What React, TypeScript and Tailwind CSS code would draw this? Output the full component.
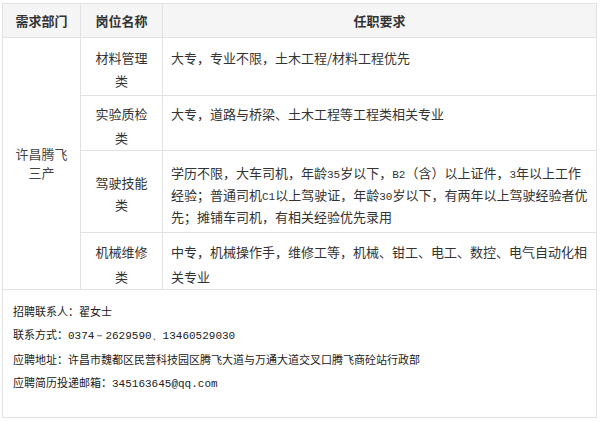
import React from 'react';

const Num: React.FC<{ children: React.ReactNode }> = ({ children }) => (
  <span className="font-['Liberation_Mono',monospace] text-[11px]">{children}</span>
);

const App: React.FC = () => {
  return (
    <div className="w-[600px] h-[421px] bg-white pt-[3px] pl-[2px] font-['Noto_Sans_CJK_SC','Noto_Sans',sans-serif] text-[#333]">
      <table className="w-[595px] table-fixed border-collapse border border-[#e2e2e2] text-[13px]">
        <colgroup>
          <col className="w-[78px]" />
          <col className="w-[82px]" />
          <col />
        </colgroup>
        <thead>
          <tr className="h-[34px] bg-[#f5f5f5]">
            <th className="border border-[#e2e2e2] font-bold text-center">需求部门</th>
            <th className="border border-[#e2e2e2] font-bold text-center">岗位名称</th>
            <th className="border border-[#e2e2e2] font-bold text-center">任职要求</th>
          </tr>
        </thead>
        <tbody>
          <tr className="h-[58px]">
            <td rowSpan={4} className="border border-[#e2e2e2] text-center align-middle leading-[19px] text-[#444] pb-[2px]">
              许昌腾飞
              <br />
              三产
            </td>
            <td className="border border-[#e2e2e2] text-center align-top pt-[8px] leading-[23px]">
              材料管理
              <br />类
            </td>
            <td className="border border-[#e2e2e2] align-top pt-[8px] px-[8px] leading-[23px]">
              大专，专业不限，土木工程/材料工程优先
            </td>
          </tr>
          <tr className="h-[55px]">
            <td className="border border-[#e2e2e2] text-center align-top pt-[6px] leading-[24px]">
              实验质检
              <br />类
            </td>
            <td className="border border-[#e2e2e2] align-top pt-[6px] px-[8px] leading-[24px]">
              大专，道路与桥梁、土木工程等工程类相关专业
            </td>
          </tr>
          <tr className="h-[82px]">
            <td className="border border-[#e2e2e2] text-center align-middle leading-[22px] pt-[4px]">
              驾驶技能
              <br />类
            </td>
            <td className="border border-[#e2e2e2] align-top pt-[12px] px-[8px] leading-[20px]">
              学历不限，大车司机，年龄<Num>35</Num>岁以下，<Num>B2</Num>（含）以上证件，<Num>3</Num>年以上工作
              <br />
              经验；普通司机<Num>C1</Num>以上驾驶证，年龄<Num>30</Num>岁以下，有两年以上驾驶经验者优
              <br />
              先；摊铺车司机，有相关经验优先录用
            </td>
          </tr>
          <tr className="h-[57px]">
            <td className="border border-[#e2e2e2] text-center align-top pt-[6px] leading-[25px]">
              机械维修
              <br />类
            </td>
            <td className="border border-[#e2e2e2] align-top pt-[6px] px-[8px] leading-[25px]">
              中专，机械操作手，维修工等，机械、钳工、电工、数控、电气自动化相
              <br />
              关专业
            </td>
          </tr>
          <tr className="h-[128px]">
            <td colSpan={3} className="border border-[#e2e2e2] align-top pt-[10px] pl-[10px] text-[11px] leading-[23px] text-[#222]">
              <p>招聘联系人：翟女士</p>
              <p>
                联系方式：<Num>0374－2629590、13460529030</Num>
              </p>
              <p>应聘地址：许昌市魏都区民营科技园区腾飞大道与万通大道交叉口腾飞商砼站行政部</p>
              <p>
                应聘简历投递邮箱：<Num>345163645@qq.com</Num>
              </p>
            </td>
          </tr>
        </tbody>
      </table>
    </div>
  );
};

export default App;
